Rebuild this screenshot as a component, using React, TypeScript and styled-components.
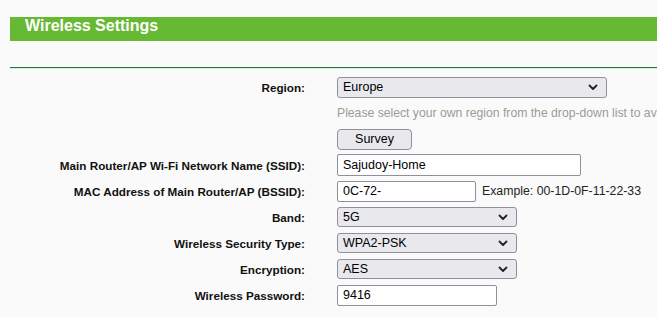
import React from "react";
import styled, { createGlobalStyle } from "styled-components";

const Global = createGlobalStyle`
  html, body { margin: 0; padding: 0; background: #fafafa; overflow: hidden; }
  body { font-family: "Liberation Sans", Arial, sans-serif; }
`;

const Page = styled.div`
  width: 657px;
  height: 318px;
  padding: 17px 0 0 10px;
  box-sizing: border-box;
`;

const TitleBar = styled.div`
  height: 24px;
  line-height: 25px;
  background: #66b933;
  color: #fff;
  font: bold 16px "Liberation Sans", Arial, sans-serif;
  padding-left: 15px;
`;

const Divider = styled.div`
  margin-top: 26px;
  height: 1px;
  background: #2b6f47;
  border-bottom: 1px solid #dcebe0;
`;

const Form = styled.div`
  margin-top: 5px;
  display: grid;
  grid-template-columns: 295px 1fr;
  column-gap: 32px;
  grid-auto-rows: 26px;
  align-items: center;
`;

const Label = styled.div`
  grid-column: 1;
  text-align: right;
  font: bold 11.7px "Liberation Sans", Arial, sans-serif;
  color: #111;
  white-space: nowrap;
`;

const Cell = styled.div`
  grid-column: 2;
  display: flex;
  align-items: center;
  gap: 6px;
  white-space: nowrap;
  min-width: 0;
`;

const Hint = styled.span`
  font: 12.2px "Liberation Sans", Arial, sans-serif;
  color: #9a9a9a;
`;

const Example = styled.span`
  font: 12.3px "Liberation Sans", Arial, sans-serif;
  color: #222;
`;

const controlFont = `12.5px "Liberation Sans", Arial, sans-serif`;

const TextInput = styled.input<{ $w: number; $h: number }>`
  box-sizing: border-box;
  width: ${(p) => p.$w}px;
  height: ${(p) => p.$h}px;
  border: 1px solid #8f8f9d;
  border-radius: 2px;
  background: #fff;
  padding: 0 5px;
  font: ${controlFont};
  color: #000;
  outline: none;
`;

const SelectWrap = styled.div<{ $w: number; $h: number }>`
  position: relative;
  width: ${(p) => p.$w}px;
  height: ${(p) => p.$h}px;
`;

const Select = styled.select`
  appearance: none;
  -webkit-appearance: none;
  box-sizing: border-box;
  width: 100%;
  height: 100%;
  border: 1px solid #8f8f9d;
  border-radius: 3px;
  background: #e9e9ed;
  padding: 0 24px 0 5px;
  font: ${controlFont};
  color: #000;
  outline: none;
`;

const Chevron = styled.svg`
  position: absolute;
  right: 9px;
  top: 50%;
  width: 10px;
  height: 7px;
  margin-top: -3px;
  pointer-events: none;
`;

const Button = styled.button`
  box-sizing: border-box;
  width: 75px;
  height: 21px;
  border: 1px solid #8f8f9d;
  border-radius: 4px;
  background: #e9e9ed;
  font: ${controlFont};
  color: #000;
  padding: 0;
`;

const Dropdown: React.FC<{ w: number; h: number; value: string }> = ({ w, h, value }) => (
  <SelectWrap $w={w} $h={h}>
    <Select defaultValue={value}>
      <option>{value}</option>
    </Select>
    <Chevron viewBox="0 0 10 7">
      <path d="M1.5 1.5 L5 5 L8.5 1.5" fill="none" stroke="#222" strokeWidth="1.8" strokeLinecap="round" strokeLinejoin="round" />
    </Chevron>
  </SelectWrap>
);

export default function App() {
  return (
    <>
      <Global />
      <Page>
        <TitleBar>Wireless Settings</TitleBar>
        <Divider />
        <Form>
          <Label>Region:</Label>
          <Cell>
            <Dropdown w={270} h={21} value="Europe" />
          </Cell>

          <Cell>
            <Hint>Please select your own region from the drop-down list to avoid conflicts with local regulations.</Hint>
          </Cell>

          <Cell>
            <Button>Survey</Button>
          </Cell>

          <Label>Main Router/AP Wi-Fi Network Name (SSID):</Label>
          <Cell>
            <TextInput $w={244} $h={22} defaultValue="Sajudoy-Home" />
          </Cell>

          <Label>MAC Address of Main Router/AP (BSSID):</Label>
          <Cell>
            <TextInput $w={139} $h={21} defaultValue="0C-72-" />
            <Example>Example: 00-1D-0F-11-22-33</Example>
          </Cell>

          <Label>Band:</Label>
          <Cell>
            <Dropdown w={180} h={20} value="5G" />
          </Cell>

          <Label>Wireless Security Type:</Label>
          <Cell>
            <Dropdown w={180} h={20} value="WPA2-PSK" />
          </Cell>

          <Label>Encryption:</Label>
          <Cell>
            <Dropdown w={180} h={20} value="AES" />
          </Cell>

          <Label>Wireless Password:</Label>
          <Cell>
            <TextInput $w={160} $h={21} defaultValue="9416" />
          </Cell>
        </Form>
      </Page>
    </>
  );
}
